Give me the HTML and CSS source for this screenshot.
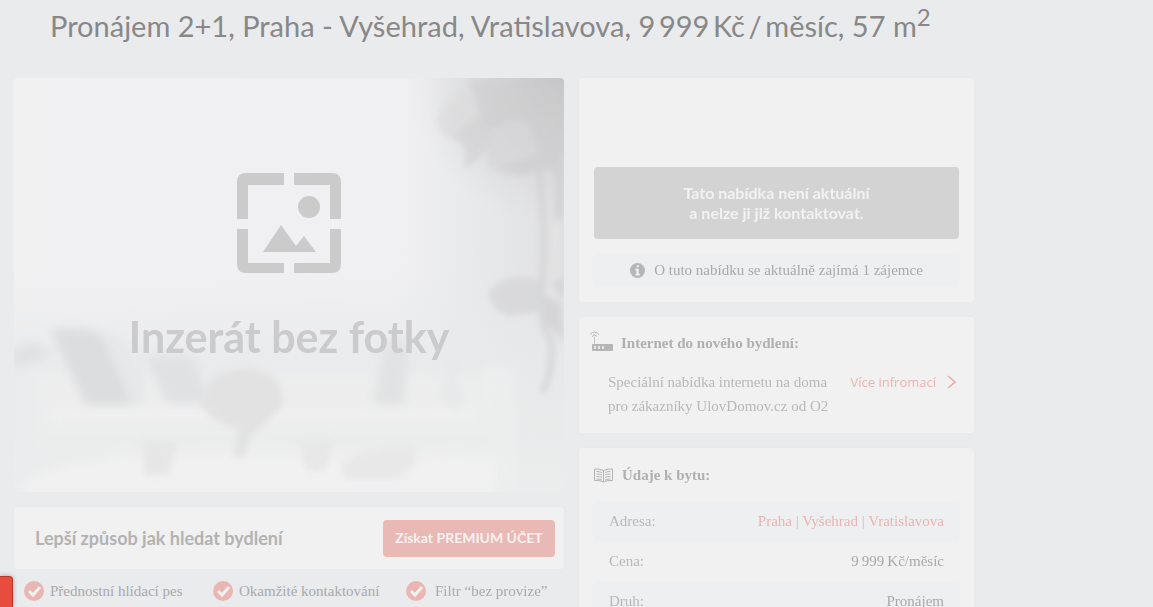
FILE: index.html
```html
<!DOCTYPE html>
<html lang="cs">
<head>
    <meta charset="UTF-8">
    <meta name="viewport" content="width=device-width, initial-scale=1.0">
    <title>Pronájem 2+1, Praha - Vyšehrad</title>
    <link rel="stylesheet" href="styles.css">
</head>
<body>
    <main class="page">
        <h1>Pronájem 2+1, Praha - Vyšehrad, Vratislavova, 9&thinsp;999&thinsp;Kč&thinsp;/&thinsp;měsíc, 57 m<sup>2</sup></h1>

        <div class="columns">
            <div class="column">
                <div class="photo">
                    <svg class="room" viewBox="0 0 550 413" preserveAspectRatio="xMidYMid slice" aria-hidden="true">
                        <defs>
                            <linearGradient id="wall" x1="0" y1="0" x2="1" y2="0">
                                <stop offset="0" stop-color="#f1f1f2"/>
                                <stop offset="0.7" stop-color="#f0f0f2"/>
                                <stop offset="0.84" stop-color="#e8e9ea"/>
                                <stop offset="1" stop-color="#e1e1e2"/>
                            </linearGradient>
                            <linearGradient id="floor" x1="0" y1="0" x2="0" y2="1">
                                <stop offset="0" stop-color="#e9eaeb" stop-opacity="0"/>
                                <stop offset="0.4" stop-color="#e9eaeb" stop-opacity="0.8"/>
                                <stop offset="1" stop-color="#ebecec"/>
                            </linearGradient>
                            <radialGradient id="corner" cx="1" cy="0" r="1">
                                <stop offset="0" stop-color="#c6c6c8"/>
                                <stop offset="0.5" stop-color="#cfcfd1" stop-opacity="0.7"/>
                                <stop offset="1" stop-color="#dcdcde" stop-opacity="0"/>
                            </radialGradient>
                            <filter id="soft" x="-20%" y="-20%" width="140%" height="140%"><feGaussianBlur stdDeviation="5"/></filter>
                            <filter id="leafy" x="-20%" y="-20%" width="140%" height="140%"><feGaussianBlur stdDeviation="3"/></filter>
                        </defs>
                        <rect width="550" height="413" fill="url(#wall)"/>
                        <rect y="190" width="550" height="223" fill="url(#floor)"/>
                        <rect x="395" width="155" height="150" fill="url(#corner)"/>
                        <!-- plant -->
                        <g filter="url(#leafy)" opacity="0.7">
                            <path d="M422 42q8-22 28-26l12 14-14 34q-22-2-26-22z" fill="#dbdbdc"/>
                            <path d="M438 58l30-24 34 6-8 26-20 4-24 22 2-22z" fill="#d1d1d3"/>
                            <path d="M455 4h95v70l-30 12-26-30-24-10z" fill="#cacacc" opacity="0.6"/>
                            <path d="M476 52q24-18 42-4l4 28-30 22-20-10z" fill="#d6d6d8"/>
                            <path d="M500 84l26-8 24-26v40l-30 4-16 4-20-10z" fill="#cdcdcf"/>
                            <path d="M524 90q8 60 4 110t8 60q4 30-8 54" fill="none" stroke="#cfcfd1" stroke-width="6"/>
                            <path d="M545 75v65" stroke="#cfcfd1" stroke-width="10"/>
                            <path d="M474 214q20-24 50-12l4 30-32 6q-18-4-22-24z" fill="#d4d4d6"/>
                            <path d="M526 216l20 8 4 40-22-22z" fill="#cfcfd1"/>
                            <path d="M536 206l14-10v26z" fill="#d1d1d3"/>
                        </g>
                        <!-- sofa and pillows -->
                        <g filter="url(#soft)">
                            <path d="M0 270l22-6 16 12-38 14z" fill="#e0e1e2"/>
                            <path d="M20 296h460l-10 60H28z" fill="#efeff0" opacity="0.5"/>
                            <path d="M472 284l28 6 4 123h-38z" fill="#eff0f0" opacity="0.6"/>
                            <path d="M38 252q34-6 52 6l36 68H72z" fill="#dcddde"/>
                            <path d="M92 256q30 2 42 66l-16 4-30-68z" fill="#e6e7e8"/>
                            <path d="M132 278h48l16 46h-44z" fill="#e0e1e2"/>
                            <path d="M372 262h22l-4 64h-32z" fill="#e1e2e3"/>
                            <path d="M436 276l14 56-24-8z" fill="#e7e8e9"/>
                            <path d="M40 330h420v12H40z" fill="#f0f0f1"/>
                            <path d="M22 346h460v30H22z" fill="#ebecec"/>
                            <path d="M10 402q60-30 230-30t240 10v33H10z" fill="#f1f1f2"/>
                        </g>
                        <!-- flowers and cups on the table -->
                        <g filter="url(#leafy)">
                            <path d="M188 328q-2-36 40-38 44 0 40 38l-18 18-14 12-6 20h-10l4-28-22-8z" fill="#e2e2e3"/>
                            <path d="M128 362h34l-6 34h-24z" fill="#e6e6e7"/>
                            <path d="M286 360h34l-8 32h-20z" fill="#e7e7e8"/>
                            <path d="M326 384l22-12 50-6 4 18-16 16h-56z" fill="#e8e8e9"/>
                        </g>
                    </svg>
                    <div class="no-photo">
                        <svg width="104" height="100" viewBox="0 0 104 100" aria-hidden="true">
                            <path d="M0 46V9q0-9 9-9h38v12H11v34zM57 0h38q9 0 9 9v37H93V12H57zM0 56h11v34h36v10H9q-9 0-9-9zM93 56h11v35q0 9-9 9H57V90h36zM26 79l18-27 15 21 8-10 12 16z"/>
                            <circle cx="72" cy="34" r="11"/>
                        </svg>
                        <p>Inzerát bez fotky</p>
                    </div>
                </div>

                <section class="card premium">
                    <h2>Lepší způsob jak hledat bydlení</h2>
                    <button type="button">Získat PREMIUM ÚČET</button>
                </section>
                <ul class="benefits">
                    <li><svg class="check" viewBox="0 0 20 20" aria-hidden="true"><circle cx="10" cy="10" r="10"/><path d="M5 10l4 4 7-8"/></svg>Přednostní hlídací pes</li>
                    <li><svg class="check" viewBox="0 0 20 20" aria-hidden="true"><circle cx="10" cy="10" r="10"/><path d="M5 10l4 4 7-8"/></svg>Okamžité kontaktování</li>
                    <li><svg class="check" viewBox="0 0 20 20" aria-hidden="true"><circle cx="10" cy="10" r="10"/><path d="M5 10l4 4 7-8"/></svg>Filtr “bez provize”</li>
                </ul>
            </div>

            <div class="column">
                <section class="card contact">
                    <p class="inactive">Tato nabídka není aktuální<br>a nelze ji již kontaktovat.</p>
                    <p class="interest">
                        <svg width="15" height="15" viewBox="0 0 15 15" aria-hidden="true">
                            <circle cx="7.5" cy="7.5" r="7.5" fill="#b6b6b7"/>
                            <path d="M6.7 2.3h2.2v2H6.7zM5.4 5.8h3.3v5h1v1.6H5.4v-1.6h1V7.4h-1z" fill="#f1f1f1"/>
                        </svg>
                        O tuto nabídku se aktuálně zajímá 1 zájemce
                    </p>
                </section>

                <section class="card internet">
                    <h3>
                        <svg width="23" height="20" viewBox="0 0 23 20" aria-hidden="true">
                            <path d="M4.500 6v8" fill="none" stroke="#c4c4c5"/>
                            <path d="M0 3.500q4.500-5 9 0M2 5.500q2.500-3 5 0" fill="none" stroke="#b6b6b7"/>
                            <rect x="2" y="13" width="21" height="7" rx="1" fill="#b6b6b7"/>
                            <path d="M4 15h2v3H4zM8 15h2v3H8zM12 15h2v3h-2z" fill="#e4e4e4"/>
                        </svg>
                        Internet do nového bydlení:
                    </h3>
                    <div class="offer">
                        <p>Speciální nabídka internetu na doma pro zákazníky UlovDomov.cz od O2</p>
                        <a href="#">Více infromací
                            <svg width="9" height="14" viewBox="0 0 9 14" aria-hidden="true"><path d="M1 1l7 6-7 6" fill="none" stroke="#eba9a6" stroke-width="1.500"/></svg>
                        </a>
                    </div>
                </section>

                <section class="card details">
                    <h3>
                        <svg width="19" height="15" viewBox="0 0 19 15" fill="none" stroke="#b3b3b4" aria-hidden="true">
                            <path d="M9.500 2.500Q5 .5 .5 1v11.500q5-.5 9 1.500 4-2 9-1.500V1Q14 .5 9.500 2.500zv11"/>
                            <path d="M2.500 3.500q3 0 5.500 1M2.500 6q3 0 5.500 1M2.500 8.500q3 0 5.500 1M2.500 11q3 0 5.500 1M16.500 3.500q-3 0-5.500 1M16.500 6q-3 0-5.500 1M16.500 8.500q-3 0-5.500 1M16.500 11q-3 0-5.500 1"/>
                        </svg>
                        Údaje k bytu:
                    </h3>
                    <table>
                        <tr>
                            <th scope="row">Adresa:</th>
                            <td class="address"><a href="#">Praha</a> | <a href="#">Vyšehrad</a> | <a href="#">Vratislavova</a></td>
                        </tr>
                        <tr>
                            <th scope="row">Cena:</th>
                            <td>9&thinsp;999&thinsp;Kč/měsíc</td>
                        </tr>
                        <tr>
                            <th scope="row">Druh:</th>
                            <td>Pronájem</td>
                        </tr>
                    </table>
                </section>
            </div>
        </div>
    </main>
    <div class="side-tab"></div>
</body>
</html>
```

FILE: styles.css
```css
* {
    box-sizing: border-box;
}
body {
    margin: 0;
    height: 100vh;
    overflow: hidden;
    background: #eaebed;
    color: #a9a9aa;
    font-family: "Liberation Serif", serif;
    font-size: 15px;
    line-height: 24px;
}
h1, h2, h3, p, ul {
    margin: 0;
    font-size: inherit;
}
a {
    color: #e9b5b2;
    text-decoration: none;
}
.page {
    max-width: 974px;
    padding-left: 14px;
}
h1 {
    padding: 6px 0 32px 36px;
    color: #888;
    font: 29px/40px Lato, sans-serif;
    white-space: nowrap;
}
h1 sup {
    font-size: 24px;
    line-height: 0;
}
.columns {
    display: grid;
    grid-template-columns: 550fr 395fr;
    align-items: start;
    gap: 15px;
}
.column {
    display: grid;
    gap: 15px;
}
.card {
    background: #f1f1f1;
    border-radius: 4px;
    box-shadow: 0 0 6px rgba(0, 0, 0, 0.02);
}

.photo {
    display: grid;
    aspect-ratio: 550 / 414;
    overflow: hidden;
    border-radius: 4px;
}
.room, .no-photo {
    grid-area: 1 / 1;
}
.room {
    width: 100%;
    height: 100%;
}
.no-photo {
    z-index: 1;
    padding-top: 95px;
    color: #cbcbcc;
    font: bold 43px/56px Lato, sans-serif;
    text-align: center;
}
.no-photo svg {
    display: block;
    margin: 0 auto 36px;
    fill: #cbcbcc;
}

.premium {
    display: flex;
    align-items: center;
    justify-content: space-between;
    height: 62px;
    padding: 0 9px 0 21px;
}
.premium h2 {
    color: #b3b3b4;
    font: bold 18px/24px Lato, sans-serif;
}
.premium button {
    width: 172px;
    height: 37px;
    padding: 0;
    border: 0;
    border-radius: 4px;
    background: #e9b9b5;
    color: #f7f1f1;
    font: bold 14px/20px Lato, sans-serif;
    white-space: nowrap;
}
.benefits {
    display: grid;
    grid-template-columns: 189fr 193fr 143fr;
    margin-top: -5px;
    padding: 0 15px 0 10px;
    list-style: none;
}
.benefits li {
    display: flex;
    align-items: center;
    gap: 6px;
    white-space: nowrap;
}
.benefits li:last-child {
    gap: 9px;
}
.check {
    width: 20px;
    height: 20px;
    fill: #e9b6b2;
}
.check path {
    fill: none;
    stroke: #f4f1f1;
    stroke-width: 3;
}

.contact {
    padding: 89px 15px 15px;
}
.inactive {
    padding: 16px 0;
    border-radius: 4px;
    background: #d3d3d3;
    color: #f2f2f2;
    font: bold 16px/20px Lato, sans-serif;
    text-align: center;
}
.interest {
    display: flex;
    align-items: center;
    justify-content: center;
    gap: 9px;
    margin-top: 14px;
    padding: 5px 0;
    background: #eeeff0;
}
.card h3 {
    display: flex;
    align-items: center;
    color: #b0b0b1;
}
.internet {
    padding: 14px 15px 15px 11px;
}
.internet h3 {
    gap: 8px;
}
.internet h3 svg {
    margin-bottom: 4px;
}
.offer {
    display: flex;
    align-items: flex-start;
    justify-content: space-between;
    padding: 15px 3px 0 18px;
    color: #b8b8b9;
}
.offer p {
    width: 236px;
}
.offer a {
    display: flex;
    align-items: center;
    gap: 11px;
    font: 13px/24px "Open Sans", sans-serif;
    white-space: nowrap;
}
.details {
    padding: 15px;
}
.details h3 {
    gap: 9px;
}
table {
    width: 100%;
    margin-top: 14px;
    border-collapse: collapse;
}
tr:nth-child(odd) {
    background: #eeeff0;
}
th, td {
    height: 40px;
    padding: 0 15px;
}
th {
    color: #b8b8b9;
    font-weight: normal;
    text-align: left;
}
td {
    text-align: right;
}
.address {
    color: #e0b8b5;
}

.side-tab {
    position: fixed;
    bottom: 0;
    left: 0;
    width: 13px;
    height: 31px;
    border: solid #b5352a;
    border-width: 1px 1px 0 0;
    border-radius: 0 4px 0 0;
    background: #e84c3d;
    box-shadow: 0 0 5px rgba(0, 0, 0, 0.3);
}
```
